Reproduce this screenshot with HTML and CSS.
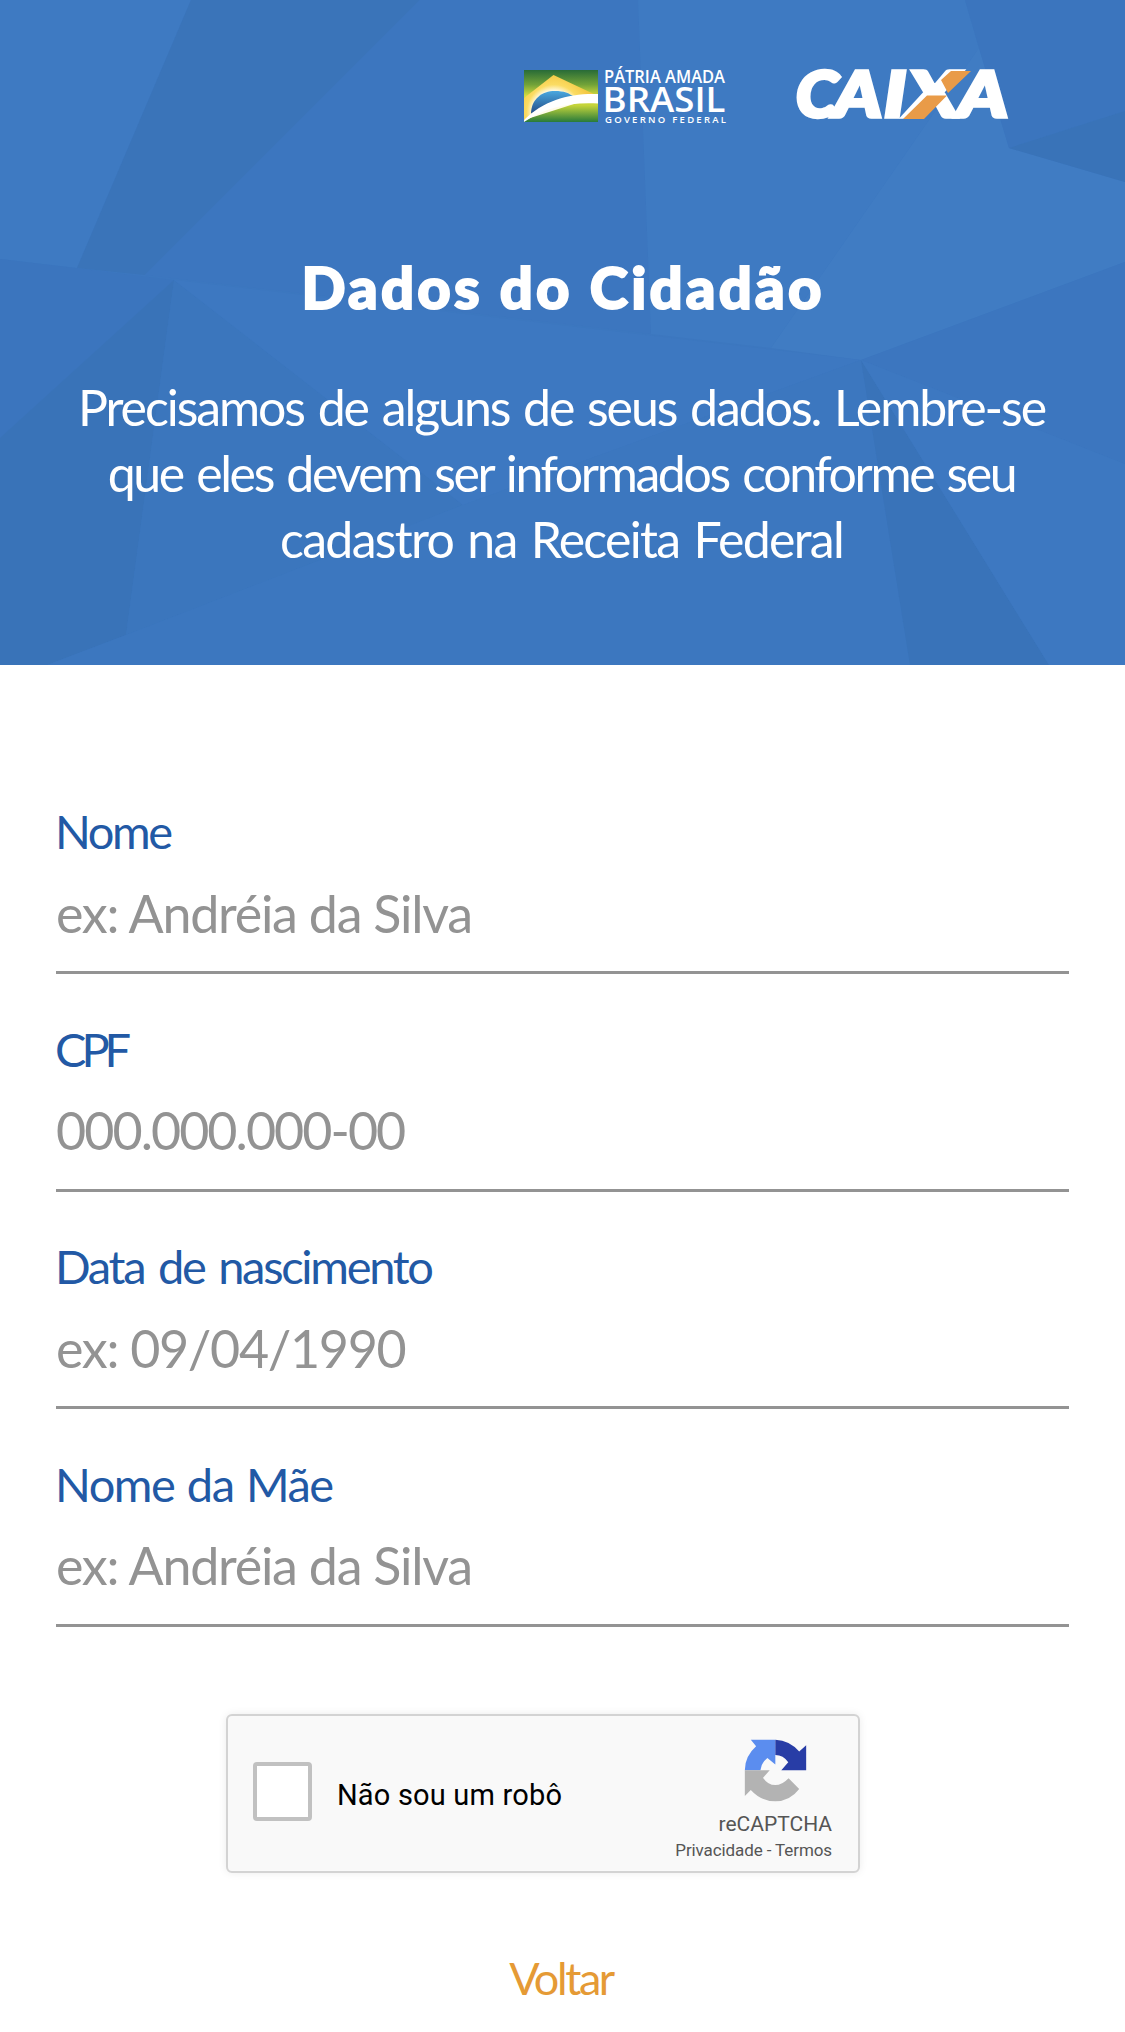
FILE: index.html
```html
<!DOCTYPE html>
<html lang="pt-BR">
<head>
<meta charset="utf-8">
<title>Dados do Cidadão</title>
<link rel="stylesheet" href="styles.css">
</head>
<body>
<header class="hero">
  <svg class="hero-bg" viewBox="0 0 1125 665" preserveAspectRatio="none" aria-hidden="true">
    <path fill="#3e7ac2" d="M0 0H191L77 268L0 259Z"/>
    <path fill="#3a74b9" d="M191 0H420L145 275L77 268Z"/>
    <path fill="#3c76bf" d="M420 0H638L651 334L145 275Z"/>
    <path fill="#3e7ac2" d="M638 0H965L979 48L771 348L651 334Z"/>
    <path fill="#407cc3" d="M979 48L1009 148L1125 182V262L861 360L771 348Z"/>
    <path fill="#3b75be" d="M965 0H1125V111L1009 148L979 48Z"/>
    <path fill="#3973b8" d="M1009 148L1125 111V182Z"/>
    <path fill="#3b75be" d="M0 259L174 280L0 438Z"/>
    <path fill="#3973b8" d="M174 280L0 438V665H47L126 635Z"/>
    <path fill="#3b76bd" d="M174 280L463 505L126 635Z"/>
    <path fill="#3d78c1" d="M174 280L861 360L463 505Z"/>
    <path fill="#3c77bf" d="M861 360L463 505L126 635L47 665H910Z"/>
    <path fill="#3973b9" d="M861 360L910 665H1049Z"/>
    <path fill="#3c76bf" d="M861 360L1125 262V464Z"/>
    <path fill="#3d78c1" d="M861 360L1125 464V665H1049Z"/>
  </svg>
  <div class="logos">
    <svg class="logo-brasil" viewBox="0 0 204 56" role="img" aria-label="Pátria Amada Brasil">
      <defs>
        <linearGradient id="sky" x1="0" y1="0" x2="0" y2="1"><stop offset="0" stop-color="#286b37"/><stop offset=".28" stop-color="#71a238"/><stop offset=".5" stop-color="#d5dc3f"/><stop offset=".68" stop-color="#c4d43a"/><stop offset="1" stop-color="#277a3b"/></linearGradient>
        <radialGradient id="sun" gradientUnits="userSpaceOnUse" cx="30" cy="46" r="38"><stop offset=".55" stop-color="#fffbe8"/><stop offset=".72" stop-color="#fbdc63"/><stop offset="1" stop-color="#f4c944"/></radialGradient>
        <linearGradient id="globe" x1="0" y1="0" x2="0" y2="1"><stop offset="0" stop-color="#4aa8df"/><stop offset="1" stop-color="#214a86"/></linearGradient>
      </defs>
      <path fill="url(#sky)" d="M0 4H74V56H0Z"/>
      <path fill="url(#sun)" d="M0 32L29.500 9L74 30L50 38L0 54Z"/>
      <path fill="url(#globe)" d="M7 48C7 33 18 25 31 25C40 25 45 27 50 31L30 40Z"/>
      <path fill="#fff" d="M0 54C20 34 46 27 74 28V37.500C46 36 22 41 0 56Z"/>
      <g fill="#fff" font-family="Open Sans">
        <text x="80" y="16.500" font-size="17.500" font-weight="600" textLength="121" lengthAdjust="spacingAndGlyphs">PÁTRIA AMADA</text>
        <text x="78.500" y="45.500" font-size="34.500" font-weight="600" textLength="123" lengthAdjust="spacingAndGlyphs">BRASIL</text>
        <text x="81" y="56.500" font-size="9.500" font-weight="600" textLength="121">GOVERNO FEDERAL</text>
      </g>
    </svg>
    <svg class="logo-caixa" viewBox="0 0 213 48" role="img" aria-label="Caixa">
      <g fill="#fff" font-family="Lato" font-weight="900" font-style="italic" font-size="62" stroke="#fff" stroke-width="3.500">
        <text x="-1" y="46.200" textLength="42" lengthAdjust="spacingAndGlyphs">C</text>
        <text x="37" y="46.200" textLength="48" lengthAdjust="spacingAndGlyphs">A</text>
        <text x="87" y="46.200" textLength="22" lengthAdjust="spacingAndGlyphs">I</text>
        <text x="110" y="46.200" textLength="52" lengthAdjust="spacingAndGlyphs">X</text>
        <text x="161" y="46.200" textLength="50" lengthAdjust="spacingAndGlyphs">A</text>
      </g>
      <path fill="#e99b48" d="M106 48H127L150 24.500H130ZM144 9L154 0H174L151 22Z"/>
    </svg>
  </div>
  <h1 class="title">Dados do Cidadão</h1>
  <p class="intro"><span class="l1">Precisamos de alguns de seus dados. Lembre-se</span> <span class="l2">que eles devem ser informados conforme seu</span> <span class="l3">cadastro na Receita Federal</span></p>
</header>
<main>
  <form class="form">
    <div class="field"><label class="lb-nome" for="nome">Nome</label><input class="in-nome" id="nome" placeholder="ex: Andréia da Silva"></div>
    <div class="field"><label class="lb-cpf" for="cpf">CPF</label><input class="in-cpf" id="cpf" placeholder="000.000.000-00"></div>
    <div class="field"><label class="lb-data" for="data">Data de nascimento</label><input class="in-data" id="data" placeholder="ex: 09/04/1990"></div>
    <div class="field"><label class="lb-mae" for="mae">Nome da Mãe</label><input class="in-nome" id="mae" placeholder="ex: Andréia da Silva"></div>
  </form>
  <section class="captcha">
    <span class="check"></span>
    <span class="robot">Não sou um robô</span>
    <div class="brand">
      <svg viewBox="254 58 189 190" aria-hidden="true">
        <path fill="#5b8def" d="M274 60H348V135L324 115Q305 130 303 152H256Q256 110 290 80Z"/>
        <path fill="#283da6" d="M348 60Q392 62 420 96L441 77V152H366L387 128Q372 106 348 106Z"/>
        <path fill="#b3b3b3" d="M256 152H331L311 175Q325 197 348 197Q368 197 388 176L420 209Q392 246 348 246Q305 246 274 212L256 230Z"/>
      </svg>
      <span class="name">reCAPTCHA</span>
      <span class="terms">Privacidade - Termos</span>
    </div>
  </section>
  <a class="back">Voltar</a>
</main>
</body>
</html>
```
FILE: styles.css
```css
* { box-sizing: border-box; }
body { margin: 0; background: #fff; font-family: Lato, sans-serif; height: 2032px; overflow: hidden; }
.hero { position: relative; height: 665px; padding-top: 66px; background: #3c77bf; color: #fff; text-align: center; }
.hero-bg { position: absolute; inset: 0; width: 100%; height: 100%; }
.logos { position: relative; display: flex; justify-content: flex-end; gap: 69px; padding-right: 115px; height: 56px; }
.logo-brasil { width: 204px; height: 56px; overflow: visible; }
.logo-caixa { width: 213px; height: 48px; margin-top: 5px; overflow: visible; }
.title { position: relative; margin: 131px 0 0; padding-left: 1px; font-size: 58px; line-height: 68px; font-weight: 900; letter-spacing: 3.2px; -webkit-text-stroke: 2px #fff; }
.intro { position: relative; margin: 53px 0 0; padding-right: 2px; font-size: 50px; line-height: 66px; word-spacing: 3px; }
.intro span { display: block; }
.l1 { letter-spacing: -2.07px; }
.l2 { letter-spacing: -2.38px; }
.l3 { letter-spacing: -1.7px; }
.form { display: flex; flex-direction: column; gap: 45.67px; padding: 138px 56px 0; }
.field { display: flex; flex-direction: column; height: 171px; border-bottom: 3px solid #939393; }
.field + .field { margin-top: 1px; }
.field label { height: 58px; margin-left: -1px; font-size: 47px; line-height: 57px; color: #2259a5; }
.lb-nome { letter-spacing: -2.4px; }
.lb-cpf { letter-spacing: -5px; }
.field .lb-data { letter-spacing: -2.3px; word-spacing: 4px; }
.field .lb-mae { letter-spacing: -1.5px; word-spacing: 2px; }
.field input { height: 103px; padding: 0; border: 0; outline: 0; background: none; font: 52px Lato, sans-serif; }
.field input::placeholder { color: #939393; opacity: 1; }
.field .in-nome { letter-spacing: -1.25px; }
.field .in-cpf { letter-spacing: -1.95px; }
.field .in-data { letter-spacing: -1.3px; }
.captcha { display: flex; align-items: center; width: 634px; height: 159px; margin: 87px 0 0 226px; padding: 0 26px 0 25px; border: 2px solid #d3d3d3; border-radius: 6px; background: #f9f9f9; box-shadow: 0 0 8px rgba(0,0,0,.08); font-family: Roboto, sans-serif; }
.check { width: 59px; height: 59px; border: 4px solid #c1c1c1; border-radius: 4px; background: #fff; margin-top: -4px; }
.robot { margin: 3px 0 0 25px; font-size: 29px; line-height: 34px; color: #000; letter-spacing: .18px; }
.brand { display: flex; flex-direction: column; align-items: flex-end; margin: 15px 0 0 auto; color: #555; }
.brand svg { width: 63px; height: 63px; margin-right: 25px; }
.name { margin-top: 9px; font-size: 21px; line-height: 26px; }
.terms { margin-top: 1px; font-size: 17px; line-height: 24px; letter-spacing: -.1px; }
.back { display: block; margin-top: 78px; padding-right: 3px; text-align: center; font-size: 45px; line-height: 54px; letter-spacing: -2.4px; color: #e59a35; }
```
